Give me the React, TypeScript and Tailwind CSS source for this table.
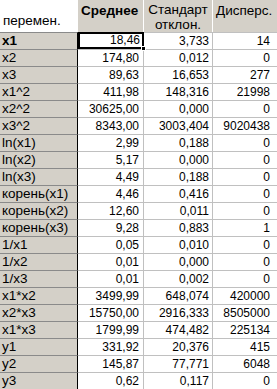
import React from 'react'

type Row = [string, string, string, string]

const rows: Row[] = [
  ['x1', '18,46', '3,733', '14'],
  ['x2', '174,80', '0,012', '0'],
  ['x3', '89,63', '16,653', '277'],
  ['x1^2', '411,98', '148,316', '21998'],
  ['x2^2', '30625,00', '0,000', '0'],
  ['x3^2', '8343,00', '3003,404', '9020438'],
  ['ln(x1)', '2,99', '0,188', '0'],
  ['ln(x2)', '5,17', '0,000', '0'],
  ['ln(x3)', '4,49', '0,188', '0'],
  ['корень(x1)', '4,46', '0,416', '0'],
  ['корень(x2)', '12,60', '0,011', '0'],
  ['корень(x3)', '9,28', '0,883', '1'],
  ['1/x1', '0,05', '0,010', '0'],
  ['1/x2', '0,01', '0,000', '0'],
  ['1/x3', '0,01', '0,002', '0'],
  ['x1*x2', '3499,99', '648,074', '420000'],
  ['x2*x3', '15750,00', '2916,333', '8505000'],
  ['x1*x3', '1799,99', '474,482', '225134'],
  ['y1', '331,92', '20,376', '415'],
  ['y2', '145,87', '77,771', '6048'],
  ['y3', '0,62', '0,117', '0'],
]

export default function App() {
  return (
    <div
      className="w-[277px] h-[389px] overflow-hidden bg-white text-black text-[13.5px] leading-[16px]"
      style={{ fontFamily: '"Liberation Sans", Arial, sans-serif' }}
    >
      {/* шапка */}
      <div className="grid grid-cols-[78px_66px_69px_1fr] h-8">
        <div className="bg-white flex items-end pl-[3px] pb-[3px]">перемен.</div>
        <div className="bg-[#d4d0c8] border-r border-white font-bold pl-[3px] pt-[3px]">Среднее</div>
        <div className="bg-[#d4d0c8] border-r border-white text-center pt-[2px] leading-[15px]">
          Стандарт
          <br />
          отклон.
        </div>
        <div className="bg-[#d4d0c8] pl-[3px] pt-[3px]">Дисперс.</div>
      </div>

      {rows.map((r, i) => (
        <div key={r[0]} className="grid grid-cols-[78px_66px_69px_1fr] h-[17px]">
          <div
            className={`bg-[#d4d0c8] border-t border-[#8a8a8a] border-r border-r-black pl-[2px] whitespace-nowrap overflow-hidden ${
              i === 0 ? 'font-bold' : ''
            }`}
          >
            {r[0]}
          </div>
          {i === 0 ? (
            <div className="relative border-2 border-black text-right pr-[2px] text-[12px] leading-[13px]">
              {r[1]}
              <span className="absolute -right-[4px] -bottom-[4px] w-[5px] h-[5px] bg-black border border-white" />
            </div>
          ) : (
            <div className="border-t border-r border-[#c0c0c0] text-right pr-[4px] text-[12px]">{r[1]}</div>
          )}
          <div className="border-t border-r border-[#c0c0c0] text-right pr-[3px] text-[12px]">{r[2]}</div>
          <div className="border-t border-[#c0c0c0] text-right pr-[7px] text-[12px]">{r[3]}</div>
        </div>
      ))}
    </div>
  )
}
